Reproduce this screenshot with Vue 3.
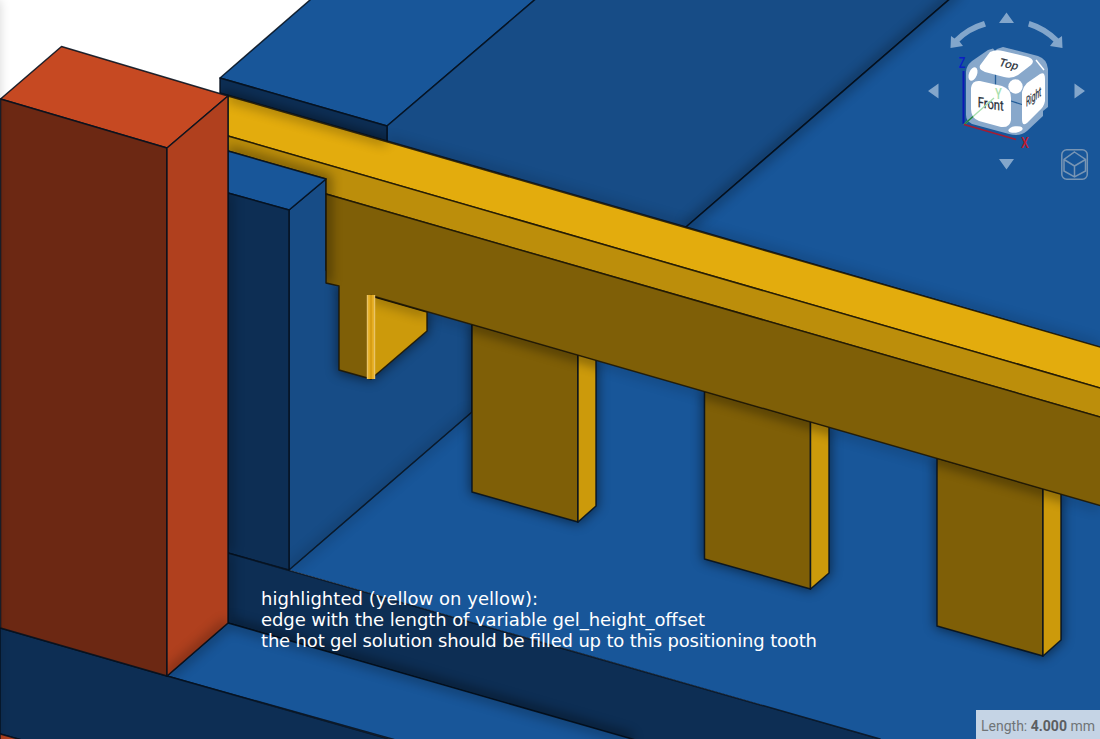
<script setup>
const teeth = [
  { x: 472, y: 324, right: 596 },
  { x: 704.5, y: 391, right: 829 },
  { x: 937, y: 458, right: 1061 }
]
const front = t => `${t.x},${t.y} ${t.x + 106},${t.y + 30.5} ${t.x + 106},${t.y + 198} ${t.x},${t.y + 168}`
const side = t => `${t.x + 106},${t.y + 30.5} ${t.right},${t.y + 35.6} ${t.right},${t.y + 182} ${t.x + 106},${t.y + 198}`
const outline = t => `${t.x},${t.y} ${t.right},${t.y + 35.6} ${t.right},${t.y + 182} ${t.x + 106},${t.y + 198} ${t.x},${t.y + 168}`
</script>

<template>
  <main class="viewport">
    <svg class="scene" width="1100" height="739" viewBox="0 0 1100 739">
      <defs>
        <filter id="soft" x="-50" y="-50" width="1200" height="839" filterUnits="userSpaceOnUse"><feGaussianBlur stdDeviation="6" /></filter>
        <clipPath id="behind"><path d="M220 78L310 0H1100V347L387 141L220 93Z" /></clipPath>
        <clipPath id="overhang"><path d="M220 78L387 126V141L220 93Z" /></clipPath>
        <clipPath id="beamTop"><path d="M228 96L1100 347V388L228 136Z" /></clipPath>
        <clipPath id="beamFront"><path d="M228 136L1100 388V505L339 286L326 284V179L228 151Z" /></clipPath>
        <clipPath id="under"><path d="M289 210L326 179V284L339 287L1100 505V739H880L289 570Z" /></clipPath>
        <clipPath id="wall"><path d="M228 193L289 210V570L228 553Z" /></clipPath>
        <clipPath id="step"><path d="M228 553L880 739H632L228 623Z" /></clipPath>
        <clipPath id="ledge"><path d="M228 623L632 739H388L167 676Z" /></clipPath>
        <clipPath id="redSide"><path d="M167 148L228 96V623L167 676Z" /></clipPath>
        <clipPath id="smallSide"><path d="M372 296L427 312V331L372 378Z" /></clipPath>
        <clipPath id="teethClip"><polygon v-for="t in teeth" :key="t.x" :points="outline(t)" /></clipPath>
      </defs>

      <g class="edge">
        <path class="blue" d="M220 78L310 0L320 -9H545L387 126Z" />
        <path class="blue-mid" d="M387 126L545 -9H959L686 227L387 141Z" />
        <path class="blue" d="M959 -9H1102V348L686 227Z" />
        <path class="navy" d="M220 78L387 126V141L220 93Z" />
      </g>
      <g clip-path="url(#behind)">
        <path class="shade trace" d="M387 141L1100 347" />
        <path class="shade faint" d="M959 -9L686 227" />
      </g>
      <g clip-path="url(#overhang)"><path class="shade" d="M220 96L387 144" /></g>

      <path class="blue" d="M289 570L472 412V300L1100 490V739H880Z" />
      <path class="blue-mid edge" d="M289 210L326 179V270L472 310V412L289 570Z" />
      <g clip-path="url(#under)">
        <path class="shade trace" d="M339 286L1100 507" />
        <path class="shade trace" d="M289 570L472 412" />
        <path class="cast" d="M339 286V371L371 379L427 331V312Z" />
        <polygon v-for="t in teeth" :key="t.x" class="cast" :points="outline(t)" />
      </g>

      <g v-for="t in teeth" :key="t.x" class="edge">
        <polygon class="gold-dark" :points="front(t)" />
        <polygon class="gold-side" :points="side(t)" />
      </g>
      <g clip-path="url(#teethClip)"><path class="shade medium" d="M326 283L1100 506" /></g>

      <g class="edge warm">
        <path class="gold" d="M228 96L1102 347.5V388.5L228 136Z" />
        <path class="gold-mid" d="M228 136L1102 388.5V417.5L326 194V179L228 151Z" />
        <path class="gold-side" d="M371 296L427 312V331L371 379Z" />
        <path class="gold-dark" d="M326 194L1102 417.5V506L371 295.5V379L339 370V286L326 283Z" />
      </g>
      <g clip-path="url(#beamTop)"><path class="shade faint" d="M228 96L387 141" /></g>
      <g clip-path="url(#beamFront)"><path class="shade medium" d="M228 151L326 179V284" /></g>
      <g clip-path="url(#smallSide)"><path class="shade faint" d="M372 296L427 312" /></g>
      <path class="highlight" d="M367 295H375V379H367Z" />
      <path class="highlight-line" d="M367.5 295V379M374.500 295V379" />
      <path class="highlight-core" d="M371 295V379" />

      <g class="edge">
        <path class="blue" d="M228 151L326 179L289 210L228 193Z" />
        <path class="navy" d="M228 193L289 210V570L228 553Z" />
        <path class="navy" d="M228 553L880 739L884 745H650L228 623Z" />
        <path class="blue" d="M228 623L632 739L650 744H410L167 676Z" />
        <path class="navy" d="M0 628L167 676L410 745H40L0 734Z" />
        <path class="red-side" d="M0 734L40 745H0Z" />
      </g>
      <g clip-path="url(#wall)"><path class="shade faint" d="M228 193V553" /></g>
      <g clip-path="url(#step)">
        <path class="shade faint" d="M228 553V623" />
        <path class="shade medium" d="M228 623L632 739" />
      </g>
      <g clip-path="url(#ledge)"><path class="shade faint" d="M167 676L228 623L632 739" /></g>

      <g class="edge">
        <path class="red-top" d="M0.500 99L61.500 46.500L228 96L167 148Z" />
        <path class="red-dark" d="M0.500 99L167 148V676L0.500 628Z" />
        <path class="red-side" d="M167 148L228 96V623L167 676Z" />
      </g>
      <g clip-path="url(#redSide)"><path class="shade faint" d="M167 676L228 623" /></g>
      <path class="shade window-edge" d="M-6 0V739" />

      <g class="caption">
        <text x="261" y="605" textLength="277">highlighted (yellow on yellow):</text>
        <text x="261" y="626" textLength="444">edge with the length of variable gel_height_offset</text>
        <text x="261" y="647" textLength="556">the hot gel solution should be filled up to this positioning tooth</text>
      </g>

      <g class="nav">
        <path d="M1006.500 12.500L1014 23H999ZM1006.500 169.500L1014 159H999ZM928 91L938.500 83.500V98.500ZM1085 91L1074.500 83.500V98.500Z" />
        <path d="M984 21L986 26.500Q970 31 959.500 41.500L963 46L950.500 48L951 36L954.500 38.500Q967 26 984 21ZM1029.500 21L1028 26.500Q1042 31 1053.500 41.500L1050 46L1062.500 48L1062 36L1058.500 38.500Q1046 26 1029.500 21Z" />
      </g>
      <g class="cube">
        <path class="cube-body" d="M997 49L1003 47L1038 56Q1047 59 1048 69V107L1043 111V116L1027 131Q1020 137 1009 134L972 124Q966 121 966 115V72Q966 66 972 61L988 50L993 48.500L995 51Z" />
        <path class="seam" d="M995.500 74V86M1011 101L1022 104.500" />
        <path class="tile" d="M990 52Q996 49 1003 51L1028 57Q1036 60 1031 65L1018 75Q1012 79 1004 77L985 72Q977 69 981 64Z" />
        <path class="tile" d="M971 88Q972 80 980 81L1002 86Q1011 89 1011 98V120Q1010 128 1001 127L979 121Q971 118 971 109Z" />
        <path class="tile" d="M1022 92Q1023 87 1027 83L1040 74Q1045 71 1045 79V101Q1044 107 1039 111L1027 123Q1022 127 1022 119Z" />
        <circle class="tile" cx="1015.500" cy="86.500" r="7.200" />
        <ellipse class="tile" cx="973" cy="74" rx="4" ry="7" transform="rotate(22 973 74)" />
        <ellipse class="tile" cx="1015.500" cy="129.500" rx="7.200" ry="3.200" transform="rotate(-8 1015.500 129.500)" />
        <path class="glint" d="M1036 60L1044 70" />
        <text class="label" transform="matrix(.86 .2 -.35 .78 998 65.500)">Top</text>
        <text class="label" transform="matrix(.86 .13 0 1.1 977.800 107)">Front</text>
        <text class="label" transform="matrix(.51 -.38 0 1.050 1026 107)">Right</text>
        <path class="axis-z" d="M963.500 71V124" />
        <path class="axis-y" d="M964 124.500L994 98" />
        <path class="axis-y-end" d="M964 124.500L973 116.500" />
        <path class="axis-x" d="M964 124.500L1016 139.500" />
        <text class="letter z" transform="matrix(.85 0 0 1.1 958.700 67.500)">Z</text>
        <text class="letter y" transform="matrix(.85 0 0 1.1 995 98.500)">Y</text>
        <text class="letter x" transform="matrix(.95 0 0 1.1 1021 148)">X</text>
      </g>
      <g class="view-icon">
        <rect x="1061.800" y="149.800" width="25.500" height="29.500" rx="5" />
        <path d="M1074.500 152L1085.500 159.500V171L1074.500 177L1064 171V159.500ZM1064 159.500L1074.500 166L1085.500 159.500M1074.500 166V177" />
      </g>
    </svg>
    <aside class="measure"><span>Length:</span> <strong>4.000</strong> <span>mm</span></aside>
  </main>
</template>

<style>
body { margin: 0; overflow: hidden; }
</style>
<style scoped>
.viewport { position: relative; width: 1100px; height: 739px; overflow: hidden; background: #fff; }
.scene { display: block; }
.edge { stroke: #04101e; stroke-opacity: .88; stroke-width: 1.5; stroke-linejoin: round; }
.warm { stroke: #1c1605; }
.blue { fill: #185699; }
.blue-mid { fill: #174c86; }
.navy { fill: #0d2e54; }
.gold { fill: #e3ac0d; }
.gold-mid { fill: #bc8e0b; }
.gold-dark { fill: #7f5f07; }
.gold-side { fill: #cc9a0b; }
.red-top { fill: #c64922; }
.red-dark { fill: #6c2813; }
.red-side { fill: #b0401e; }
.shade { fill: none; stroke: #000; stroke-width: 10; opacity: .5; filter: url(#soft); }
.medium { opacity: .4; }
.faint { opacity: .28; }
.trace { opacity: .15; }
.window-edge { opacity: .2; }
.cast { fill: #000; stroke: #000; stroke-width: 4; opacity: .5; filter: url(#soft); }
.highlight { fill: #e5ad20; }
.highlight-line { stroke: #e8c368; stroke-width: 1.4; }
.highlight-core { stroke: #c98e08; stroke-width: 1; }
.caption { fill: #fff; font: 18px "DejaVu Sans", sans-serif; }
.nav { fill: #83a6cb; }
.cube { fill: #29313b; font: 12px Roboto, sans-serif; }
.cube-body { fill: #88a8cb; }
.tile { fill: #fff; }
.glint { stroke: #fff; stroke-width: 1.5; }
.seam { stroke: #235d99; stroke-width: 1.3; }
.label { font-size: 13px; stroke: #29313b; stroke-width: .25; }
.letter { font-size: 13px; font-weight: 500; }
.axis-z { stroke: #0b18b5; stroke-width: 2; }
.axis-y { stroke: #a8dfae; stroke-width: 1.3; }
.axis-y-end { stroke: #1c8040; stroke-width: 1.5; }
.axis-x { stroke: #a51c32; stroke-width: 1.5; }
.z { fill: #0b20c5; }
.y { fill: #a8dfae; }
.x { fill: #bd1b2d; }
.view-icon { fill: none; stroke: #7895b4; stroke-width: 1.5; }
.measure { position: absolute; right: 0; bottom: 0; box-sizing: border-box; width: 124px; height: 29px; padding-left: 5px; background: #c5d4e5; color: #707477; font: 14px/32px Roboto, sans-serif; white-space: nowrap; }
.measure strong { color: #5b5e61; }
</style>
